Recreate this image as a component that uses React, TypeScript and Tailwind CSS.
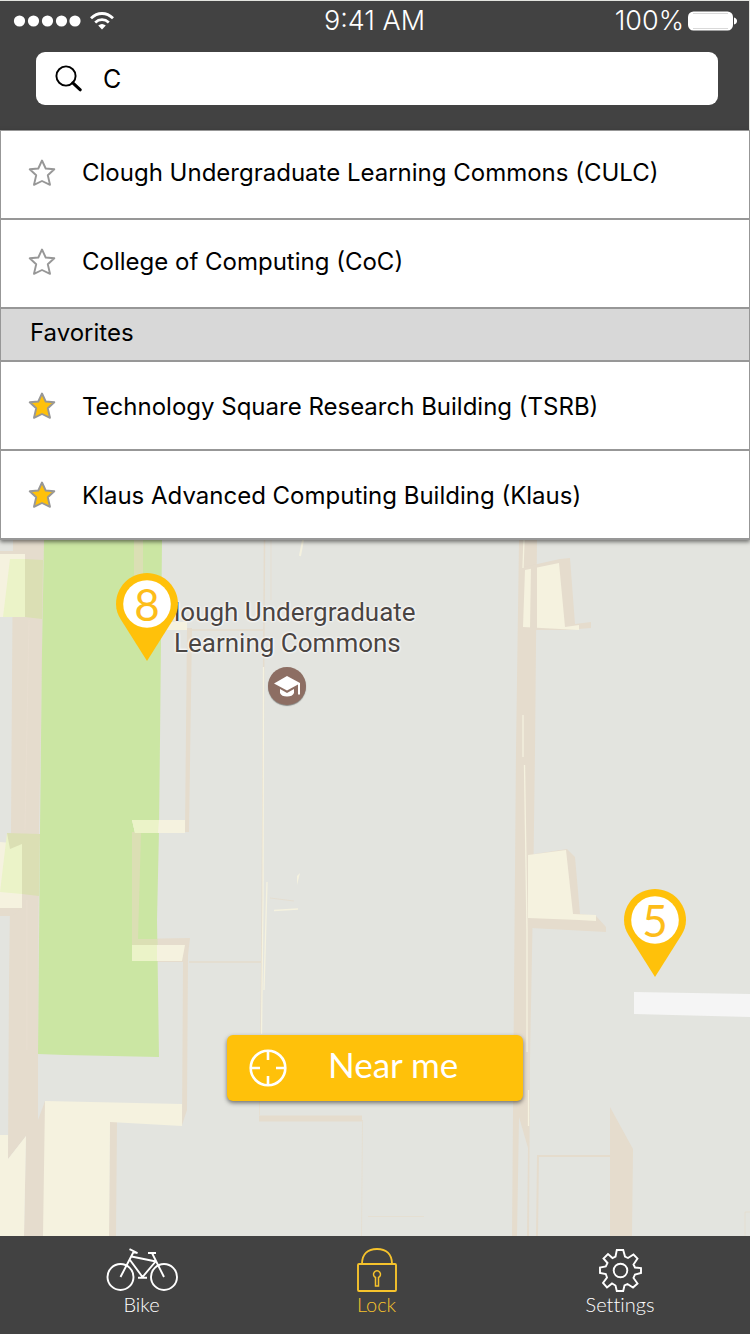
import { useState } from "react";

type Place = { id: string; name: string; favorite: boolean };

const results: Place[] = [
  { id: "culc", name: "Clough Undergraduate Learning Commons (CULC)", favorite: false },
  { id: "coc", name: "College of Computing (CoC)", favorite: false },
];

const favorites: Place[] = [
  { id: "tsrb", name: "Technology Square Research Building (TSRB)", favorite: true },
  { id: "klaus", name: "Klaus Advanced Computing Building (Klaus)", favorite: true },
];

function StatusBar() {
  return (
    <div className="grid h-10 grid-cols-3 items-center px-3 text-[27px] font-light leading-8 text-white">
      <div className="flex items-center gap-2">
        <svg width="69" height="12" viewBox="0 0 69 12" fill="currentColor" aria-hidden="true">
          {[7.5, 21.5, 35.5, 49.5, 63].map((cx) => (
            <circle key={cx} cx={cx} cy="6" r="5.6" />
          ))}
        </svg>
        <svg width="26" height="20" viewBox="0 0 26 20" fill="none" stroke="currentColor" aria-hidden="true">
          <path d="M2 7.200C8.500 .9 17.500 .9 24 7.200" strokeWidth="2.800" />
          <path d="M6.200 11.400C10.200 7.700 15.800 7.700 19.800 11.400" strokeWidth="2.700" />
          <path d="M9.200 14.500Q13 11.300 16.800 14.500L13 18.500Z" fill="currentColor" stroke="none" />
        </svg>
      </div>
      <div className="text-center">9:41 AM</div>
      <div className="flex items-center justify-end gap-1">
        <span>100%</span>
        <svg width="49" height="20" viewBox="1 0 49 20" aria-hidden="true">
          <rect x="1" y=".5" width="45" height="19" rx="5.500" fill="#fff" />
          <path d="M6 2.500H41M6 17.500H41" stroke="#c9c9c9" strokeWidth=".7" />
          <path d="M47 6.500q3 1 3 3.500t-3 3.500z" fill="#fff" />
        </svg>
      </div>
    </div>
  );
}

function SearchField() {
  const [query, setQuery] = useState("C");
  return (
    <div className="ml-9 mr-[31px] mt-[11px] flex h-[53px] items-center rounded-[9px] bg-white pl-[19px]">
      <label htmlFor="place-search" aria-label="Search places">
        <svg width="28" height="28" viewBox="0 0 28 28" fill="none" stroke="#000" aria-hidden="true">
          <circle cx="11" cy="11" r="9.600" strokeWidth="1.900" />
          <path d="M17.800 17.800L25.300 24.800" strokeWidth="3" strokeLinecap="round" />
        </svg>
      </label>
      <input
        id="place-search"
        type="text"
        value={query}
        onChange={(e) => setQuery(e.target.value)}
        className="ml-5 h-10 min-w-0 flex-1 bg-transparent text-[25px] leading-8 text-black outline-none"
      />
    </div>
  );
}

function PlaceRow({ place }: { place: Place }) {
  const [favorite, setFavorite] = useState(place.favorite);
  return (
    <li className="flex h-[89px] items-center border-b-2 border-[#979797] pl-[27px] group-data-[kind=results]:pb-1">
      <button
        type="button"
        aria-label={`Favorite ${place.name}`}
        aria-pressed={favorite}
        onClick={() => setFavorite(!favorite)}
        className="flex"
      >
        <svg width="28" height="28" viewBox="0 0 28 28" aria-hidden="true">
          <path
            d="M14 1.500L17.700 9.500L26.300 10.300L19.800 16.300L22 25.800L14 22L6 25.800L8.200 16.300L1.700 10.300L10.300 9.500Z"
            fill={favorite ? "#ffc10a" : "none"}
            stroke="#979797"
            strokeWidth="1.900"
            strokeLinejoin="round"
          />
        </svg>
      </button>
      <a href={`#${place.id}`} className="ml-[26px] truncate leading-8 group-data-[kind=favorites]:pt-0.5">
        {place.name}
      </a>
    </li>
  );
}

function MapArt() {
  return (
    <svg
      className="absolute inset-0 h-full w-full"
      viewBox="0 540 750 696"
      preserveAspectRatio="xMidYMid slice"
      aria-hidden="true"
    >
      <rect y="540" width="750" height="696" fill="#e3e4df" />

      <g fill="#e5dccd">
        <path d="M13 540H44L42 670L39 830L38 1060L38 1120L45 1101V1236H24L26 1136L8 1159L9 980L11 830L12 680Z" />
        <path d="M0 903H22V908L12 916H0Z" />
        <path d="M0 551H13V556H0Z" />
        <path d="M187 628H192L189 832H185Z" />
        <path d="M133 939L190 938L188 955L187 1110L182 1125L183 962H131Z" />
        <path d="M110 1122H117L116 1236H109Z" />
      </g>
      <path d="M45 1101L182 1104V1126L110 1122L109 1236H43Z" fill="#f5f2df" />
      <path d="M0 1135H8V1159L26 1136L24 1236H0Z" fill="#f5f2df" />
      <path d="M0 554H25V617H0ZM0 842L22 844V908H0Z" fill="#f5f2df" />
      <path d="M10 559H25V617H3ZM7 833L22 844V894L0 892Z" fill="#ebf3c8" />
      <path d="M25 559L43 560L42 619L25 617ZM7 833L40 834L39 896L22 894V844L10 849Z" fill="#dbdfb4" />
      <path d="M29 620L25 830M27 900V1050" fill="none" stroke="#e8ded0" strokeWidth="1" />

      <path d="M44 540H162L160 740L159 830L157 920L159 1057L65 1055L38 1054L40 830L42 650Z" fill="#cbe6a3" />
      <path d="M134 540H143V576H134ZM132 832H141L138 939H157V946H132Z" fill="#dbdfb4" />
      <path d="M132 820H185V833H135ZM132 945H185L182 961H132Z" fill="#f5f2df" />
      <path d="M132 820H159L158 833H135ZM132 945H157V961H132Z" fill="#ebf3c8" />
      <path d="M170 622H187V630H165Z" fill="#f5f2df" />

      <g fill="none" stroke="#e5dccd">
        <path d="M189 962H261M192 630H263" strokeWidth="1.500" />
        <path d="M264.500 540L262 930L261 1034" strokeWidth="1.500" />
        <path d="M271 540V600M259.500 1100V1115M362.500 1120L361.500 1236M368 1216.500H424" strokeWidth=".7" />
        <path d="M259 1118.500H362" strokeWidth="6" />
        <path d="M537 1236L538 1156H610" strokeWidth="2" />
        <path d="M745 1236V1212H750M270 898L294 901" strokeWidth=".8" />
      </g>
      <path d="M303 540L300 556" stroke="#f5f2df" strokeWidth="2" fill="none" />
      <path d="M263.500 667L263 900L261.500 1034M267 882L264 990M274 910.500L298 909" stroke="#f5f2df" strokeWidth="1.300" fill="none" />
      <path d="M300 873L297 885V876Z" fill="#f5f2df" />

      <path d="M519 540H537L535 750L533 900L530 1060L529 1236H527L528 1148L519 1117L517 1236H512L514 990L516 750Z" fill="#e5dccd" />
      <path d="M524 567L560 559L570 558L575 624L591 622V628L565 630H524Z" fill="#e5dccd" />
      <path d="M525 570L559 563L565 627L579 625V630L523 627Z" fill="#f5f2df" />
      <path d="M531 566H537V628H530Z" fill="#e5dccd" />
      <path d="M528 855L567 849L575 857L580 914L596 916L606 927V932L530 928Z" fill="#e5dccd" />
      <path d="M528 855L566 850L573 914L596 915V921L579 920L528 918Z" fill="#f5f2df" />
      <path d="M524 540L523 568M523 715V757M524.500 765L527 930L527 1052M528.500 1090V1126" stroke="#f5f2df" strokeWidth="1.300" fill="none" />
      <path d="M610 1107L633 1149L632 1236H610Z" fill="#e5dccd" />
      <path d="M634 992L750 994V1017L634 1014Z" fill="#f5f5f5" />
    </svg>
  );
}

function Pin({ count }: { count: number }) {
  return (
    <button type="button" aria-label={`${count} spots`} className="relative block h-[88px] w-[62px]">
      <svg width="62" height="88" viewBox="0 0 62 88" aria-hidden="true">
        <path d="M31 0C48 0 62 13.800 62 31C62 37 60 42 57.500 46L31 88L4.500 46C2 42 0 37 0 31C0 13.800 14 0 31 0Z" fill="#ffc10a" />
        <circle cx="31" cy="31" r="23.800" fill="#fff" />
      </svg>
      <span className="absolute inset-x-0 top-0 text-center font-[Lato] text-[44px] leading-[62px] text-[#fdbd1a]">
        {count}
      </span>
    </button>
  );
}

function BikeIcon() {
  return (
    <svg width="74" height="44" viewBox="0 0 74 44" fill="none" stroke="currentColor" strokeWidth="1.900" aria-hidden="true">
      <circle cx="15.500" cy="29" r="13" />
      <circle cx="59" cy="29" r="13" />
      <path d="M15.500 29L28.500 4M24.500 1.200L32.500 5L28 4M25 12L37.500 29L51 13M26.500 8.500L51 13.500M33 29.800H42M43 5H51M47 5L59 29" />
    </svg>
  );
}

function LockIcon() {
  return (
    <svg width="42" height="44" viewBox="0 0 42 44" fill="none" stroke="currentColor" strokeWidth="1.900" aria-hidden="true">
      <rect x="2" y="16" width="38" height="27" rx="1" />
      <path d="M6 16C6 6 12 1 21 1S36 6 36 16" />
      <path d="M19.500 29.500A3.500 3.500 0 1 1 22.500 29.500V38H19.500Z" strokeWidth="1.500" />
    </svg>
  );
}

function SettingsIcon() {
  return (
    <svg width="44" height="44" viewBox="0 0 44 44" fill="none" stroke="currentColor" strokeWidth="1.900" aria-hidden="true">
      <circle cx="22.500" cy="22.500" r="6.800" />
      <path d="M18.800 2H25.200L27 8.500L30 10L35.500 6.500L39.500 10.500L35.500 16.500L37 19.500L43 20V25L37 26.500L35.500 30L39.500 35.500L35 39.500L29.500 36L26.500 37.500L25.200 43H18.800L17.500 37.500L14 35.500L9 39.500L5 35L9 29.500L7.800 26L2 25V19.500L7.800 18.500L9.500 15L5.500 10.500L10 6L14.500 10L17.500 8.500Z" />
    </svg>
  );
}

function TabBar() {
  const item = "flex flex-col items-center font-[Lato] text-[20px] font-light leading-6 [font-variant-ligatures:none]";
  return (
    <nav className="grid h-[98px] shrink-0 grid-cols-[235fr_235fr_252fr] items-start bg-[#424242] pl-6 pr-1 pt-3 text-white">
      <a href="#bike" className={item}>
        <BikeIcon />
        Bike
      </a>
      <a href="#lock" aria-current="page" className={`${item} text-[#f6c32c]`}>
        <LockIcon />
        Lock
      </a>
      <a href="#settings" className={item}>
        <SettingsIcon />
        Settings
      </a>
    </nav>
  );
}

export default function App() {
  return (
    <div className="flex min-h-screen flex-col bg-[#e3e4df] font-[Inter,sans-serif]">
      <header className="mr-px mt-px shrink-0 bg-[#424242] pb-[25px]">
        <StatusBar />
        <SearchField />
      </header>

      <section className="relative z-10 shrink-0 border-x border-t border-[#979797] bg-white text-[24px] text-black shadow-[0_2px_4px_rgba(0,0,0,0.5)]">
        <ul className="group" data-kind="results">
          {results.map((place) => (
            <PlaceRow key={place.id} place={place} />
          ))}
        </ul>
        <h2 className="h-[53px] border-b-2 border-[#979797] bg-[#d8d8d8] pl-[29px] leading-[48px]">Favorites</h2>
        <ul className="group" data-kind="favorites">
          {favorites.map((place) => (
            <PlaceRow key={place.id} place={place} />
          ))}
        </ul>
      </section>

      <main className="relative flex min-h-[696px] flex-1 flex-col justify-end overflow-hidden">
        <MapArt />
        <div className="absolute left-[174px] top-[57px] font-[Roboto] text-[26px] leading-[31px] text-[#4a4543] [text-shadow:0_0_3px_#fff,0_0_3px_#fff,0_0_2px_#fff]">
          <p>lough Undergraduate</p>
          <p>Learning Commons</p>
        </div>
        <div className="absolute left-[268px] top-[127px] flex size-[38px] items-center justify-center rounded-full bg-[#8d6e63] shadow-[0_1px_1px_rgba(0,0,0,0.4)]">
          <svg width="28" height="22" viewBox="0 0 28 22" fill="#fff" aria-hidden="true">
            <path d="M14 1L27 8V19.500H25V9.500L14 15.500L1 8.500ZM7 14L14 18L21 14V18Q19.500 21.500 14 21.500T7 18Z" />
          </svg>
        </div>
        <div className="absolute left-[116px] top-[33px]">
          <Pin count={8} />
        </div>
        <div className="absolute left-[624px] top-[349px]">
          <Pin count={5} />
        </div>
        <button
          type="button"
          className="relative mx-auto mb-[135px] flex h-[66px] w-[296px] items-center rounded-md bg-[#ffc10a] pl-[21px] text-white shadow-[0_2px_4px_rgba(0,0,0,0.5)]"
        >
          <svg width="40" height="40" viewBox="0 0 40 40" fill="none" stroke="#fff" strokeWidth="2.600" aria-hidden="true">
            <circle cx="20" cy="20" r="17.300" />
            <path d="M20 3V12M20 28V37M3 20H12M28 20H37" />
          </svg>
          <span className="ml-10 pb-2 font-[Lato] text-[35px] leading-10">Near me</span>
        </button>
      </main>

      <TabBar />
    </div>
  );
}
